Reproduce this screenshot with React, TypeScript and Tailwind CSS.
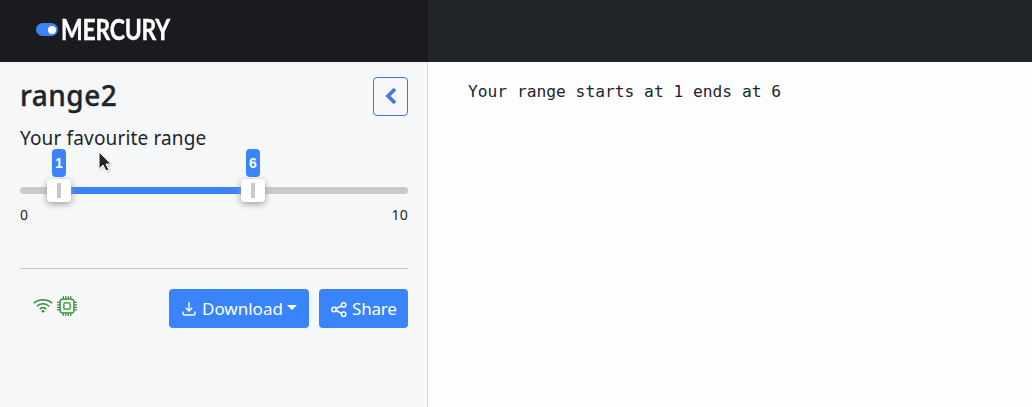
import { BsCpu } from "react-icons/bs";

function WifiIcon() {
  return (
    <svg width="20" height="20" viewBox="0 0 20 20" fill="none" stroke="currentColor" strokeWidth="1.5">
      <path d="M.8 7.2C6 2.6 14 2.6 19.2 7.2M3.8 10.2c3.6-3.2 8.8-3.2 12.4 0M6.8 13c2-1.6 4.4-1.6 6.4 0" />
      <circle cx="10" cy="15.3" r="1.3" fill="currentColor" stroke="none" />
    </svg>
  );
}

function DownloadIcon() {
  return (
    <svg width="14" height="16" viewBox="0 0 14 16" fill="none" stroke="currentColor" strokeWidth="1.4" strokeLinejoin="round" className="mt-px">
      <path d="M7 1v8.5M3.8 6.8 7 10l3.2-3.2M1 10.4v1.8Q1 14 2.8 14h8.4q1.8 0 1.8-1.8v-1.8" />
    </svg>
  );
}

function ShareIcon() {
  return (
    <svg width="16" height="17" viewBox="0 0 16 17" fill="none" stroke="currentColor" strokeWidth="1.5" className="mt-px">
      <circle cx="3" cy="8.5" r="2.2" />
      <circle cx="12.6" cy="4" r="2.2" />
      <circle cx="12.6" cy="13.2" r="2.2" />
      <path d="m5 7.5 5.6-2.5M5 9.5l5.6 2.8" />
    </svg>
  );
}

function Thumb({ value, className }: { value: number; className: string }) {
  return (
    <div className={`absolute -top-2 flex h-[23px] w-6 items-center justify-center rounded-[4px] bg-white shadow-[0_2px_6px_#999] ${className}`}>
      <div className="absolute -top-[30px] flex h-7 w-[14px] items-center justify-center rounded-[4px] bg-[#3983fb] font-['Liberation_Sans',sans-serif] text-[14px] font-bold text-white">
        {value}
      </div>
      <div className="h-[15px] w-[4px] bg-[#cac8c9]" />
    </div>
  );
}

function RangeSlider() {
  return (
    <div className="relative mt-[37px] h-[7px] w-[388px] rounded-full bg-[#cac9cb]">
      <div className="ml-[39px] h-full w-[194px] bg-[#3983fb]" />
      <Thumb value={1} className="left-[27px]" />
      <Thumb value={6} className="left-[221px]" />
    </div>
  );
}

function Logo() {
  return (
    <div className="flex items-center pl-9">
      <div className="mb-px flex h-[13px] w-[22px] items-center justify-end rounded-full bg-[#3983fb] pr-[2px]">
        <div className="h-2 w-2 rounded-full bg-white" />
      </div>
      <div className="mb-[2px] ml-[3px] origin-left scale-x-[0.82] font-['Lato',sans-serif] text-[28px] leading-8 font-bold tracking-[-0.3px] text-white [-webkit-text-stroke:0.4px_white]">
        MERCURY
      </div>
    </div>
  );
}

export default function App() {
  return (
    <div className="relative flex h-[407px] w-[1032px] flex-col overflow-hidden bg-[#fefdfe] font-['Noto_Sans',sans-serif] text-[#212529]">
      <header className="flex h-[62px] shrink-0 bg-[#212529]">
        <div className="flex w-[428px] items-center border-r border-[#15171a] bg-[#191b1e] pb-[2px]">
          <Logo />
        </div>
      </header>
      <div className="flex flex-1">
        <aside className="w-[428px] shrink-0 border-r border-[#d8dadc] bg-[#f5f7f9] pl-5">
          <div className="flex w-[388px] justify-between pt-[15px]">
            <h1 className="text-[28px] leading-9 font-medium tracking-[0.5px] [-webkit-text-stroke:0.35px_#212529]">range2</h1>
            <button className="flex h-[39px] w-[35px] items-center justify-center rounded-[4px] border border-[#3d79d2] text-[#3d77e8]">
              <svg width="12" height="18" viewBox="0 0 12 18" fill="none" stroke="currentColor" strokeWidth="3.6" className="mb-[2px] ml-px">
                <path d="M10 2 3 9l7 7" />
              </svg>
            </button>
          </div>
          <div className="mt-[10px] h-6 text-[19px] leading-[25px] tracking-[0.15px] whitespace-nowrap">Your favourite range</div>
          <RangeSlider />
          <div className="mt-[11px] flex w-[388px] justify-between text-[14px] leading-5 tracking-[0.2px]">
            <span>0</span>
            <span>10</span>
          </div>
          <hr className="mt-[43px] w-[388px] border-[#bfc2c5]" />
          <div className="mt-5 flex w-[388px]">
            <div className="flex w-[149px] gap-1 pt-[7px] pl-[13px] text-[#2c8c2c]">
              <WifiIcon />
              <BsCpu size={20} />
            </div>
            <button className="flex h-[39px] w-[140px] items-center rounded-[4px] bg-[#3983fb] pl-[13px] text-[17px] text-white">
              <DownloadIcon />
              <span className="ml-[6px]">Download</span>
              <span className="mb-[3px] ml-[4px] border-x-[5px] border-t-[5px] border-x-transparent border-t-white" />
            </button>
            <button className="ml-[10px] flex h-[39px] w-[89px] items-center rounded-[4px] bg-[#3983fb] pl-3 text-[17px] text-white">
              <ShareIcon />
              <span className="ml-[5px] tracking-[-0.2px]">Share</span>
            </button>
          </div>
        </aside>
        <main className="pt-[18px] pl-10 font-['DejaVu_Sans_Mono',monospace] text-[16.25px] leading-6 whitespace-pre">
          Your range starts at 1 ends at 6
        </main>
      </div>
      <svg className="absolute top-[151px] left-[97px] drop-shadow-[1px_1px_1px_#0003]" width="16" height="22" viewBox="0 0 16 22">
        <path d="M2 1v17l4-4 3 6 3-1-3-6h5Z" fill="#262626" stroke="#fff" />
      </svg>
    </div>
  );
}
